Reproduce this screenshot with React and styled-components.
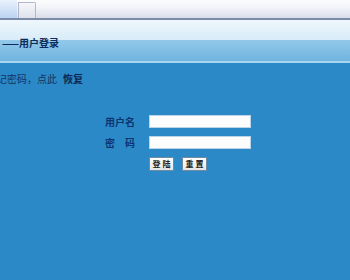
import styled, { createGlobalStyle } from "styled-components";

const Global = createGlobalStyle`
  html, body {
    margin: 0;
    padding: 0;
    overflow: hidden;
  }
  body {
    font-family: "Noto Sans CJK SC", "Liberation Sans", sans-serif;
  }
`;

//=====================LAYOUT====================
const Page = styled.div`
  display: flex;
  flex-direction: column;
  width: 350px;
  height: 280px;
  background-color: #2b89c7;
`;

const TopBar = styled.div`
  display: flex;
  align-items: flex-end;
  height: 20px;
  box-sizing: border-box;
  background: linear-gradient(#fcfcfe 0%, #f2f3f8 45%, #d9dceb 100%);
  border-bottom: 2px solid #7d8ca6;
`;

const Tab = styled.div`
  box-sizing: border-box;
  width: ${(p) => (p.$active ? "17px" : "18px")};
  height: ${(p) => (p.$active ? "18px" : "16px")};
  margin-right: 1px;
  background: ${(p) =>
    p.$active
      ? "linear-gradient(#eaf1fc, #bcd4f3)"
      : "linear-gradient(#f6f7fb, #dfe1ec)"};
  border: ${(p) => (p.$active ? "none" : "1px solid #b3b8c8")};
  border-bottom: none;
  border-radius: 0 2px 0 0;
`;

const Header = styled.div`
  display: flex;
  align-items: center;
  height: 43px;
  box-sizing: border-box;
  padding: 3px 0 0 2px;
  background: linear-gradient(
    #eef7fd 0%,
    #d9ecf8 48%,
    #92c8ea 50%,
    #6fb4df 100%
  );
  border-bottom: 2px solid #a8d6f2;
  font-size: 10px;
  font-weight: bold;
  color: #0c2c5c;
`;

const Body = styled.div`
  flex: 1;
  display: flex;
  flex-direction: column;
  padding-top: 10px;
`;

const Notice = styled.div`
  margin-left: -13px;
  font-size: 10px;
  line-height: 12px;
  color: #13345e;
  b {
    margin-left: 6px;
    color: #0b2550;
  }
`;

const Form = styled.div`
  display: grid;
  grid-template-columns: 44px 102px;
  row-gap: 8px;
  margin: 30px 0 0 105px;
`;

const Label = styled.div`
  font-size: 10px;
  line-height: 13px;
  font-weight: bold;
  color: #0b3470;
  white-space: pre;
`;

const Input = styled.input`
  box-sizing: border-box;
  width: 102px;
  height: 13px;
  margin: 0;
  padding: 0;
  border: 1px solid #b9d4ea;
  background: #fdfdfd;
  outline: none;
`;

const Buttons = styled.div`
  grid-column: 2;
  display: flex;
  gap: 8px;
`;

const Button = styled.button`
  box-sizing: border-box;
  width: 25px;
  height: 14px;
  margin: 0;
  padding: 0;
  border: 1px solid #6f8aa3;
  background: linear-gradient(#ffffff, #e6e6e6);
  font-family: "Noto Sans CJK SC", sans-serif;
  font-size: 8px;
  line-height: 12px;
  font-weight: bold;
  letter-spacing: 2px;
  text-indent: 2px;
  color: #222;
`;

const App = () => {
  return (
    <>
      <Global />
      <Page>
        <TopBar>
          <Tab $active />
          <Tab />
        </TopBar>
        <Header>——用户登录</Header>
        <Body>
          <Notice>
            忘记密码，点此<b>恢复</b>
          </Notice>
          <Form>
            <Label>用户名</Label>
            <Input type="text" />
            <Label>密　码</Label>
            <Input type="password" />
            <Buttons>
              <Button>登陆</Button>
              <Button>重置</Button>
            </Buttons>
          </Form>
        </Body>
      </Page>
    </>
  );
};
export default App;
